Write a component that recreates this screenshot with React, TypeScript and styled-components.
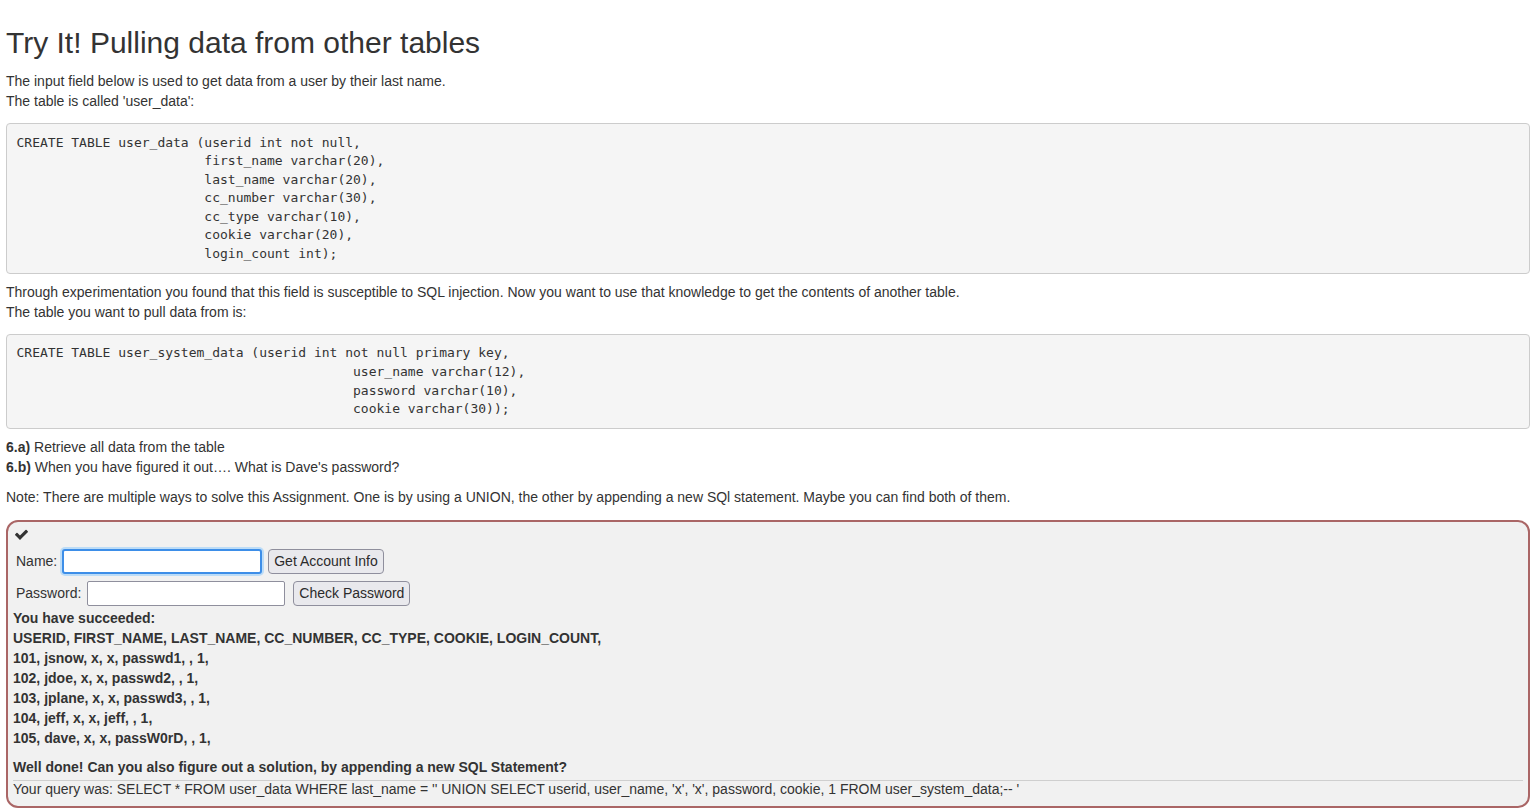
import * as React from "react";
import styled, { createGlobalStyle, css } from "styled-components";

const GlobalStyle = createGlobalStyle`
  html, body {
    margin: 0;
    padding: 0;
    background: #fff;
  }
  body {
    font-family: "Liberation Sans", Arial, Helvetica, sans-serif;
    font-size: 14px;
    line-height: 20px;
    color: #333;
  }
`;

const Page = styled.div`
  padding: 8px 6px 0 6px;
`;

const Title = styled.h2`
  margin: 18px 0 12px 0;
  font-size: 30px;
  font-weight: 400;
  line-height: 33px;
  color: #333;
`;

const Para = styled.p`
  margin: 0 0 10px 0;
`;

const Code = styled.pre`
  margin: 12px 0 8px 0;
  padding: 9.5px;
  font-family: "DejaVu Sans Mono", "Liberation Mono", monospace;
  font-size: 13px;
  line-height: 18.57px;
  color: #333;
  background: #f5f5f5;
  border: 1px solid #ccc;
  border-radius: 4px;
  white-space: pre;
  overflow: hidden;
`;

const AttackBox = styled.div`
  margin-top: 13px;
  padding: 3px 5px 9px 5px;
  background: #f1f1f1;
  border: 2px solid #aa6666;
  border-radius: 12px;
`;

const CheckRow = styled.div`
  height: 20px;
  display: flex;
  align-items: center;
  padding-left: 1px;
  margin-top: -1px;
`;

const Form = styled.div`
  display: flex;
  flex-direction: column;
  gap: 6px;
  margin: 4px 0 2px 0;
  padding-left: 3px;
`;

const FormRow = styled.div`
  display: flex;
  align-items: center;
  height: 26px;
`;

const Label = styled.span<{ $gap: number }>`
  margin-right: ${p => p.$gap}px;
`;

const TextInput = styled.input<{ $focused?: boolean; $gap: number }>`
  box-sizing: border-box;
  width: ${p => (p.$focused ? 200 : 198)}px;
  height: 25px;
  margin: 0 ${p => p.$gap}px 0 0;
  padding: 0 4px;
  font-family: "Liberation Sans", Arial, sans-serif;
  font-size: 14px;
  color: #222;
  background: #fff;
  border: 1px solid #8f8f9d;
  border-radius: 2px;
  outline: none;
  ${p =>
    p.$focused &&
    css`
      border: 2px solid #3d8ee8;
      border-radius: 3px;
      box-shadow: 0 0 0 2px #bcdcf7;
    `};
`;

const Button = styled.button`
  box-sizing: border-box;
  height: 25px;
  padding: 0 5px;
  font-family: "Liberation Sans", Arial, sans-serif;
  font-size: 14px;
  color: #2b2b2b;
  background: #e9e9ed;
  border: 1px solid #8f8f9d;
  border-radius: 4px;
`;

const Bold = styled.div`
  font-weight: 700;
`;

const Spacer = styled.div`
  height: 9px;
`;

const Rule = styled.hr`
  margin: 3px 0 0 0;
  border: 0;
  border-top: 1px solid #cfcfcf;
`;

const Query = styled.div`
  line-height: 16px;
`;

const CheckIcon = () => (
  <svg width="15" height="15" viewBox="0 0 1792 1792" fill="#333">
    <path d="M1671 566q0 40-28 68l-724 724-136 136q-28 28-68 28t-68-28l-136-136-362-362q-28-28-28-68t28-68l136-136q28-28 68-28t68 28l294 295 656-657q28-28 68-28t68 28l136 136q28 28 28 68z" />
  </svg>
);

const pad24 = " ".repeat(24);
const pad43 = " ".repeat(43);

const userData = [
  "CREATE TABLE user_data (userid int not null,",
  pad24 + "first_name varchar(20),",
  pad24 + "last_name varchar(20),",
  pad24 + "cc_number varchar(30),",
  pad24 + "cc_type varchar(10),",
  pad24 + "cookie varchar(20),",
  pad24 + "login_count int);",
].join("\n");

const systemData = [
  "CREATE TABLE user_system_data (userid int not null primary key,",
  pad43 + "user_name varchar(12),",
  pad43 + "password varchar(10),",
  pad43 + "cookie varchar(30));",
].join("\n");

const results = [
  "USERID, FIRST_NAME, LAST_NAME, CC_NUMBER, CC_TYPE, COOKIE, LOGIN_COUNT,",
  "101, jsnow, x, x, passwd1, , 1,",
  "102, jdoe, x, x, passwd2, , 1,",
  "103, jplane, x, x, passwd3, , 1,",
  "104, jeff, x, x, jeff, , 1,",
  "105, dave, x, x, passW0rD, , 1,",
];

const App = () => {
  const [name, setName] = React.useState("");
  const [password, setPassword] = React.useState("");

  return (
    <Page>
      <GlobalStyle />
      <Title>Try It! Pulling data from other tables</Title>
      <Para>
        The input field below is used to get data from a user by their last name.
        <br />
        The table is called 'user_data':
      </Para>
      <Code>{userData}</Code>
      <Para>
        Through experimentation you found that this field is susceptible to SQL injection. Now you want to use
        that knowledge to get the contents of another table.
        <br />
        The table you want to pull data from is:
      </Para>
      <Code>{systemData}</Code>
      <Para>
        <b>6.a)</b> Retrieve all data from the table
        <br />
        <b>6.b)</b> When you have figured it out…. What is Dave's password?
      </Para>
      <Para>
        Note: There are multiple ways to solve this Assignment. One is by using a UNION, the other by appending a
        new SQl statement. Maybe you can find both of them.
      </Para>
      <AttackBox>
        <CheckRow>
          <CheckIcon />
        </CheckRow>
        <Form>
          <FormRow>
            <Label $gap={5}>Name:</Label>
            <TextInput
              $focused
              $gap={6}
              type="text"
              value={name}
              onChange={e => setName(e.target.value)}
            />
            <Button type="button">Get Account Info</Button>
          </FormRow>
          <FormRow>
            <Label $gap={6}>Password:</Label>
            <TextInput
              $gap={8}
              type="password"
              value={password}
              onChange={e => setPassword(e.target.value)}
            />
            <Button type="button">Check Password</Button>
          </FormRow>
        </Form>
        <Bold>You have succeeded:</Bold>
        {results.map(line => (
          <Bold key={line}>{line}</Bold>
        ))}
        <Spacer />
        <Bold>Well done! Can you also figure out a solution, by appending a new SQL Statement?</Bold>
        <Rule />
        <Query>
          Your query was: SELECT * FROM user_data WHERE last_name = '' UNION SELECT userid, user_name, 'x', 'x',
          password, cookie, 1 FROM user_system_data;-- '
        </Query>
      </AttackBox>
    </Page>
  );
};

export default App;
